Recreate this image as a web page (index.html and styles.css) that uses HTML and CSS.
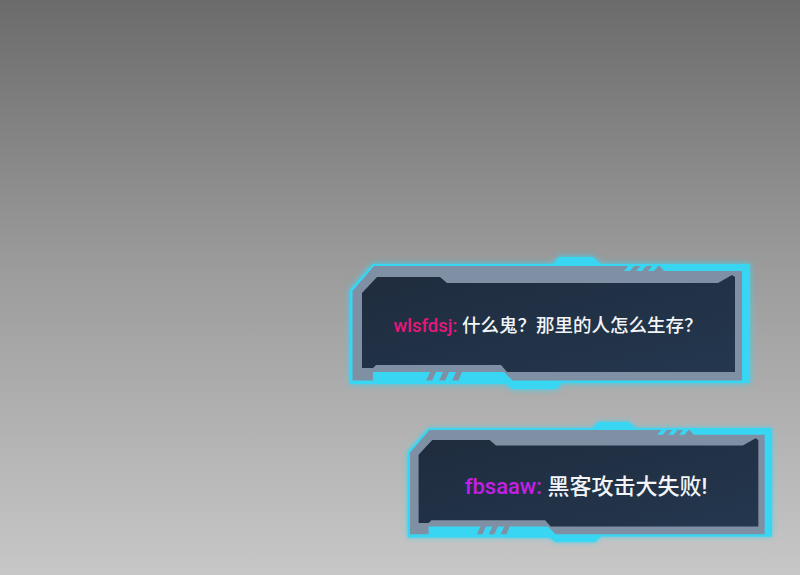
FILE: index.html
```html
<!DOCTYPE html>
<html lang="zh">
<head>
<meta charset="utf-8">
<link rel="stylesheet" href="styles.css">
</head>
<body>
<div class="stage">
  <div class="bubble bubble-a">
    <svg class="frame" viewBox="0 0 404 133" preserveAspectRatio="none" aria-hidden="true">
      <defs>
        <filter id="glowA" x="-10%" y="-25%" width="120%" height="150%">
          <feGaussianBlur stdDeviation="3" result="b"/>
          <feMerge><feMergeNode in="b"/><feMergeNode in="SourceGraphic"/></feMerge>
        </filter>
        <linearGradient id="panelA" x1="0" y1="0" x2="1" y2="1">
          <stop offset="0" stop-color="#1f2c3e"/>
          <stop offset="1" stop-color="#24374e"/>
        </linearGradient>
      </defs>
      <polygon class="cyan" filter="url(#glowA)" points="4,34 27,8 207,8 213,1 247,1 254,8 404,8 404,127 216,127 210,133 166,133 160,128 4,128"/>
      <polygon class="gray" points="6.5,35 28,10 398,10 398,124.5 6.5,124.5"/>
      <polygon class="cyan" points="312,8 404,8 404,15 318,15"/>
      <polygon class="cyan" points="278,15 284,8 290,8 284,15"/>
      <polygon class="cyan" points="290,15 296,8 302,8 296,15"/>
      <polygon class="cyan" points="302,15 308,8 314,8 308,15"/>
      <polygon class="cyan" points="396,11 404,11 404,127 396,127"/>
      <polygon class="cyan" points="27,116 84,116 79,127 27,127"/>
      <polygon class="cyan" points="90,116 97,116 92,127 85,127"/>
      <polygon class="cyan" points="103,116 110,116 105,127 98,127"/>
      <polygon class="cyan" points="116,116 158,116 166,124 166,128 111,128"/>
      <polygon class="panel-a" points="16,37 31,21 94,21 101,27 372,27 386,19 389,21 389,116 161,116 155,109 30,109 27,112 16,112"/>
    </svg>
    <p class="line line-a"><span class="name name-a">wlsfdsj:</span> 什么鬼？那里的人怎么生存？</p>
  </div>
  <div class="bubble bubble-b">
    <svg class="frame" viewBox="0 0 404 133" preserveAspectRatio="none" aria-hidden="true">
      <defs>
        <filter id="glowB" x="-10%" y="-25%" width="120%" height="150%">
          <feGaussianBlur stdDeviation="3" result="b"/>
          <feMerge><feMergeNode in="b"/><feMergeNode in="SourceGraphic"/></feMerge>
        </filter>
        <linearGradient id="panelB" x1="0" y1="0" x2="1" y2="1">
          <stop offset="0" stop-color="#1f2c3e"/>
          <stop offset="1" stop-color="#24374e"/>
        </linearGradient>
      </defs>
      <polygon class="cyan" filter="url(#glowB)" points="4,34 27,8 207,8 213,1 247,1 254,8 404,8 404,127 216,127 210,133 166,133 160,128 4,128"/>
      <polygon class="gray" points="6.5,35 28,10 398,10 398,124.5 6.5,124.5"/>
      <polygon class="cyan" points="312,8 404,8 404,15 318,15"/>
      <polygon class="cyan" points="278,15 284,8 290,8 284,15"/>
      <polygon class="cyan" points="290,15 296,8 302,8 296,15"/>
      <polygon class="cyan" points="302,15 308,8 314,8 308,15"/>
      <polygon class="cyan" points="396,11 404,11 404,127 396,127"/>
      <polygon class="cyan" points="27,116 84,116 79,127 27,127"/>
      <polygon class="cyan" points="90,116 97,116 92,127 85,127"/>
      <polygon class="cyan" points="103,116 110,116 105,127 98,127"/>
      <polygon class="cyan" points="116,116 158,116 166,124 166,128 111,128"/>
      <polygon class="panel-b" points="16,37 31,21 94,21 101,27 372,27 386,19 389,21 389,116 161,116 155,109 30,109 27,112 16,112"/>
    </svg>
    <p class="line line-b"><span class="name name-b">fbsaaw:</span> 黑客攻击大失败!</p>
  </div>
</div>
</body>
</html>
```
FILE: styles.css
```css
html, body {
  margin: 0;
  padding: 0;
}
body {
  width: 800px;
  height: 575px;
  overflow: hidden;
  background: linear-gradient(180deg, #6b6b6b 0%, #9a9a9a 45%, #c7c7c7 100%);
  font-family: Roboto, "Noto Sans CJK SC", sans-serif;
}
.stage {
  display: flex;
  flex-direction: column;
  align-items: flex-end;
  padding-top: 256px;
  gap: 32px;
}
.bubble {
  position: relative;
  display: flex;
  align-items: center;
  justify-content: center;
  box-sizing: border-box;
}
.bubble-a {
  width: 404px;
  height: 133px;
  margin-right: 50px;
  padding: 6px 0 3px 0;
}
.bubble-b {
  width: 368px;
  height: 121px;
  margin-right: 28px;
  padding: 6px 4px 2px 0;
}
.frame {
  position: absolute;
  left: 0;
  top: 0;
  width: 100%;
  height: 100%;
  overflow: visible;
}
.cyan { fill: #38d6f3; }
.gray { fill: #7f90a5; }
.panel-a { fill: url(#panelA); }
.panel-b { fill: url(#panelB); }
.line {
  position: relative;
  margin: 0;
  color: #f3f5f8;
  white-space: nowrap;
  font-weight: 500;
  font-family: Roboto, "Noto Sans CJK SC", sans-serif;
}
.line-a { font-size: 18.5px; }
.line-b { font-size: 22px; }
.name { font-weight: 500; }
.name-a { color: #e8177c; }
.name-b { color: #c41fe8; }
```
